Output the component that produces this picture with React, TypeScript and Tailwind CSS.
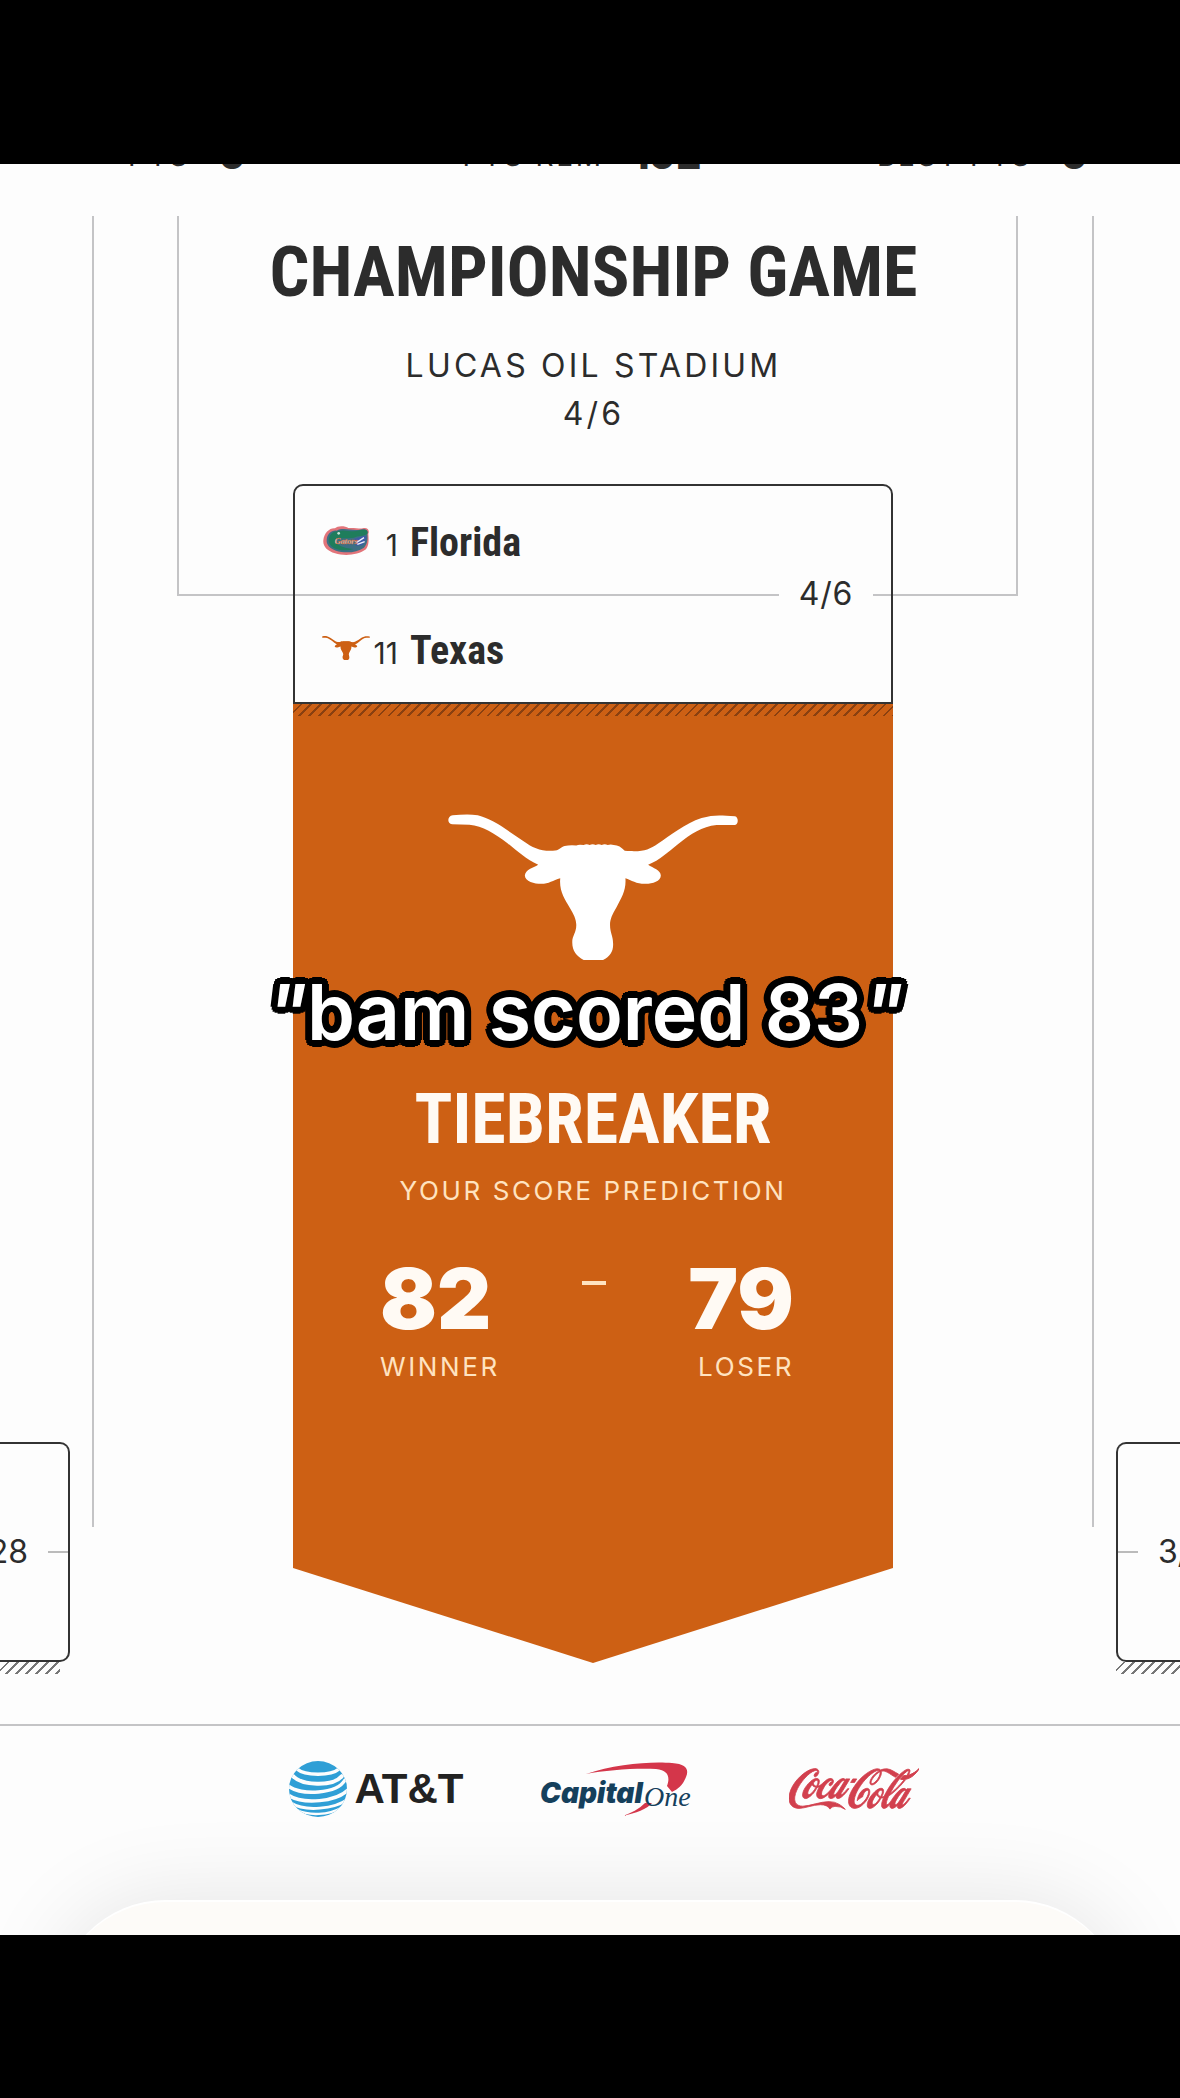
import React from 'react';
import { SiCocacola } from 'react-icons/si';

interface Team {
  seed: number;
  name: string;
  logo: React.ReactNode;
}

const STEER_PATH =
  'M70 74 C54 76 52 98 68 101 L120 102 C160 106 195 128 235 158 C265 182 290 206 326 222 C310 232 288 236 286 254 C286 272 315 279 335 279 C358 279 370 268 392 262 C388 300 405 325 420 350 C432 370 440 385 440 402 C440 425 428 435 428 452 C427 480 440 495 462 507 L520 507 C542 495 552 480 550 455 C550 435 541 425 541 402 C541 385 548 370 560 350 C575 320 590 300 587 262 C605 268 620 279 645 279 C665 280 693 272 693 254 C692 238 670 232 655 222 C690 208 715 184 745 160 C785 128 815 108 860 103 L915 103 C926 100 926 80 915 77 C870 73 850 72 815 82 C765 98 720 136 685 158 C655 178 640 184 585 180 C575 170 565 163 552 163 Q543 159 534 163 Q525 158 516 163 Q507 158 498 163 Q489 158 480 163 Q471 158 462 163 Q448 160 440 164 Q420 162 405 166 C392 170 390 180 370 180 C335 182 310 172 280 150 C235 120 190 85 145 74 C120 70 95 72 70 74 Z';

function Steer({ className }: { className: string }) {
  return (
    <svg viewBox="56 70 868 440" className={className} fill="currentColor" aria-hidden="true">
      <path d={STEER_PATH} />
    </svg>
  );
}

function Gator() {
  return (
    <svg viewBox="126 162 144 92" className="w-12" aria-hidden="true">
      <path
        d="M130 208 C132 185 150 170 165 172 C172 163 196 164 205 171 C225 170 240 174 248 172 C262 168 270 178 265 188 C266 205 268 222 258 235 C235 252 195 256 165 247 C142 240 128 226 130 208 Z"
        fill="#e2747a"
      />
      <path
        d="M140 208 C141 188 155 177 170 179 C190 168 215 180 240 176 C258 172 266 178 262 190 C264 205 262 220 252 230 C230 245 195 248 168 239 C150 233 139 222 140 208 Z"
        fill="#3d6f84"
      />
      <path
        d="M146 207 C148 190 160 180 174 181 C195 173 212 186 238 178 C256 173 266 178 262 188 C250 197 235 193 222 200 C200 203 180 200 165 204 C166 222 190 232 220 234 C195 243 146 238 146 207 Z"
        fill="#1f7d5c"
      />
      <path d="M222 204 L254 194 L260 200 L248 222 L228 224 Z" fill="#3c5aa8" />
      <path d="M230 214 L252 200 M232 220 L254 212" stroke="#f1f1fa" strokeWidth="4" />
      <circle cx="176" cy="187" r="4" fill="#c9e5d6" />
      <text x="164" y="219" fontFamily="Liberation Serif, serif" fontSize="25" fontWeight="700" fontStyle="italic" fill="#f3dcc6" stroke="#c0552f" strokeWidth="1">
        Gators
      </text>
    </svg>
  );
}

function AttLogo() {
  return (
    <a href="#att" className="flex items-center gap-2 text-[42px] leading-none font-bold text-[#222]">
      <svg viewBox="0 0 58 56" className="h-14 w-[58px]" aria-hidden="true">
        <defs>
          <clipPath id="globe">
            <ellipse cx="29" cy="28" rx="29" ry="28" />
          </clipPath>
        </defs>
        <g clipPath="url(#globe)">
          <rect width="58" height="56" fill="#2f9fd6" />
          <g fill="none" stroke="#fdfdfd" strokeLinecap="round">
            <path d="M8 8 C16 15 42 15 50 8" strokeWidth="3.5" />
            <path d="M3 14 C12 25 44 26 53 15" strokeWidth="4" />
            <path d="M-1 25 C12 35 48 33 56 19" strokeWidth="3.5" />
            <path d="M-1 34 C14 44 48 41 60 28" strokeWidth="3.5" />
            <path d="M2 42 C16 51 46 48 59 38" strokeWidth="3" />
            <path d="M8 49 C20 55 40 54 52 47" strokeWidth="2.5" />
          </g>
        </g>
      </svg>
      AT&amp;T
    </a>
  );
}

function CapitalOneLogo() {
  return (
    <a href="#capital-one" aria-label="Capital One" className="mr-4">
      <svg viewBox="0 0 156 58" className="h-[58px] w-[156px]" aria-hidden="true">
        <path
          d="M46 14 C75 4 112 1 132 3 C147 4 149 10 146 17 C143 25 138 29 132 32 L127 26 C130 18 129 10 116 9 C95 8 66 10 46 14 Z"
          fill="#d4364a"
        />
        <path d="M105 43 C99 49 91 53 83 56 C96 53 107 49 112 43 Z" fill="#d4364a" />
        <text x="0" y="43" fontFamily="Inter, sans-serif" fontSize="28" fontWeight="900" fontStyle="italic" fill="#15405c">
          Capital
        </text>
        <text x="104" y="46" fontFamily="Liberation Serif, serif" fontSize="28" fontStyle="italic" fill="#15405c">
          One
        </text>
      </svg>
    </a>
  );
}

function CocaColaLogo() {
  return (
    <a href="#coca-cola" aria-label="Coca-Cola" className="text-[#d2404e]">
      <SiCocacola viewBox="0 8 24 8" className="h-[44px] w-[130px]" stroke="currentColor" strokeWidth="0.15" />
    </a>
  );
}

function StatItem({ label, value }: { label: string; value: number }) {
  return (
    <div className="flex items-end gap-7">
      <span className="pb-[3px] text-[28px] leading-[20px] tracking-widest">{label}</span>
      <span className="text-[40px] leading-[29px] font-extrabold">{value}</span>
    </div>
  );
}

function TeamRow({ team }: { team: Team }) {
  return (
    <li className="flex h-[108px] items-center pl-[27px]">
      <span className="flex w-12 justify-center text-[#cd6014]">{team.logo}</span>
      <span className="flex items-baseline pt-2">
        <span className="w-7 text-right text-[30px] leading-10">{team.seed}</span>
        <span className="ml-3 font-['Roboto_Condensed','Liberation_Sans_Narrow',sans-serif] text-[40px] leading-10 font-bold">{team.name}</span>
      </span>
    </li>
  );
}

function Hatch({ className }: { className: string }) {
  return (
    <div
      aria-hidden="true"
      className={`h-3 bg-[repeating-linear-gradient(135deg,transparent_0px,transparent_5px,currentColor_5px,currentColor_7px)] ${className}`}
    />
  );
}

const teams: Team[] = [
  { seed: 1, name: 'Florida', logo: <Gator /> },
  { seed: 11, name: 'Texas', logo: <Steer className="w-12" /> },
];

export default function App() {
  return (
    <div className="flex min-h-screen flex-col bg-black font-['Inter',sans-serif] text-[#2c2c2c]">
      <div className="h-[164px]" />

      <main className="flex flex-1 flex-col overflow-hidden bg-[#fdfdfd]">
        {/* Stats strip, scrolled under the top edge */}
        <div className="grid h-[5px] grid-cols-3 content-end items-end overflow-hidden px-[92px]">
          <div className="pl-9">
            <StatItem label="PTS" value={0} />
          </div>
          <div className="justify-self-center pr-4">
            <StatItem label="PTS REM" value={192} />
          </div>
          <div className="justify-self-end">
            <StatItem label="BEST PTS" value={0} />
          </div>
        </div>

        {/* Bracket */}
        <div className="mt-[47px] grid grid-cols-[70px_1fr_64px] items-end">
          <div className="overflow-hidden">
            <div className="flex h-[220px] items-center justify-end rounded-r-[10px] border-2 border-l-0 border-[#333] text-[32px]">
              <span>3/28</span>
              <span className="ml-5 h-0.5 w-5 shrink-0 bg-[#bbb]" />
            </div>
            <Hatch className="mr-2.5 text-[#777]" />
          </div>

          <div className="relative self-start px-[22px] pb-[11px]">
            <div className="absolute inset-x-[22px] top-0 bottom-[147px] border-x-2 border-[#c4c4c6]" />

            <header className="relative mr-[76px] ml-[85px] border-x-2 border-b-2 border-[#c4c4c6] pt-5 pb-[156px] text-center">
              <h1 className="-ml-2 font-['Roboto_Condensed','Liberation_Sans_Narrow',sans-serif] text-[70px] leading-[72px] font-bold whitespace-nowrap">
                CHAMPIONSHIP GAME
              </h1>
              <p className="mt-[34px] -ml-2 text-[32px] leading-[48px] tracking-widest">
                LUCAS OIL STADIUM
                <br />
                4/6
              </p>
            </header>

            <section className="relative mx-auto -mt-[112px] max-w-[600px]">
              <div className="relative rounded-t-[10px] border-2 border-[#333]">
                <ul>
                  {teams.map((team) => (
                    <TeamRow key={team.name} team={team} />
                  ))}
                </ul>
                <span className="absolute top-1/2 right-[18px] w-[94px] -translate-y-1/2 bg-[#fdfdfd] text-center text-[32px] tracking-wide">
                  4/6
                </span>
              </div>

              <div className="bg-[#cd6014] pb-[280px] text-[#fffaf4] [clip-path:polygon(0_0,100%_0,100%_calc(100%-95px),50%_100%,0_calc(100%-95px))]">
                <Hatch className="text-[#8a4010]" />
                <Steer className="mx-auto mt-[98px] w-[290px] text-white" />
                <h2 className="mt-[118px] text-center font-['Roboto_Condensed','Liberation_Sans_Narrow',sans-serif] text-[70px] leading-[80px] font-bold">
                  TIEBREAKER
                </h2>
                <p className="mt-4 text-center text-[26px] leading-8 tracking-widest text-[#ffe3c0]">
                  YOUR SCORE PREDICTION
                </p>
                <div className="mx-auto mt-[52px] flex max-w-[426px] justify-between pr-3">
                  <div>
                    <p className="text-[84px] leading-[80px] font-black">82</p>
                    <p className="mt-3 text-[26px] leading-8 tracking-widest text-[#ffe3c0]">WINNER</p>
                  </div>
                  <span className="mt-[22px] h-1 w-6 bg-[#ffe3c0]" />
                  <div className="text-right">
                    <p className="text-[84px] leading-[80px] font-black">79</p>
                    <p className="mt-3 text-[26px] leading-8 tracking-widest text-[#ffe3c0]">LOSER</p>
                  </div>
                </div>
              </div>

              {/* Caption laid over the banner */}
              <p className="absolute inset-x-0 top-[480px] flex justify-center pr-4 text-[77px] leading-[96px] font-semibold whitespace-nowrap text-white [text-shadow:7px_0_#000,-7px_0_#000,0_7px_#000,0_-7px_#000,5px_5px_#000,-5px_5px_#000,5px_-5px_#000,-5px_-5px_#000,6px_3px_#000,-6px_3px_#000,6px_-3px_#000,-6px_-3px_#000,3px_6px_#000,-3px_6px_#000,3px_-6px_#000,-3px_-6px_#000,3px_0_#000,-3px_0_#000,0_3px_#000,0_-3px_#000]">
                <span className="italic">"</span>bam scored 83<span className="italic">"</span>
              </p>
            </section>
          </div>

          <div className="overflow-hidden">
            <div className="flex h-[220px] items-center rounded-l-[10px] border-2 border-r-0 border-[#333] text-[32px]">
              <span className="mr-5 h-0.5 w-5 shrink-0 bg-[#bbb]" />
              <span>3/28</span>
            </div>
            <Hatch className="text-[#777]" />
          </div>
        </div>

        {/* Sponsors */}
        <div className="mt-[50px] flex h-32 items-center justify-center gap-[77px] border-t-2 border-[#c4c4c6] pl-7 font-['Liberation_Sans',sans-serif]">
          <AttLogo />
          <CapitalOneLogo />
          <CocaColaLogo />
        </div>

        {/* Bottom sheet peeking in */}
        <div className="mx-14 mt-12 -mb-[125px] h-[160px] rounded-t-[110px] border-t-2 border-white bg-[#fdfbf8] shadow-[0_0_90px_rgba(0,0,0,0.1)]" />
      </main>

      <div className="h-[163px]" />
    </div>
  );
}
